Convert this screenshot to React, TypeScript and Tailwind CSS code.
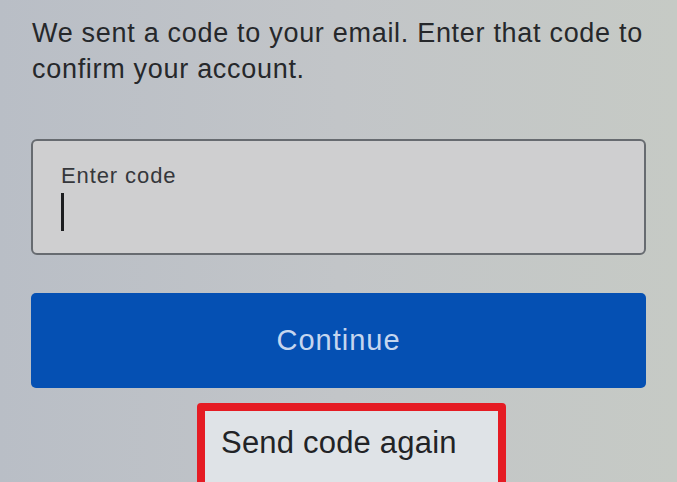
export default function App() {
  return (
    <div
      className="w-[677px] h-[482px] overflow-hidden bg-gradient-to-r from-[#b9bec6] via-[#c2c5c8] to-[#c6cac5] text-[#2a2c2f]"
      style={{ fontFamily: "'Liberation Sans', Arial, sans-serif" }}
    >
      <div className="px-[31px] pt-[15px]">
        <p className="text-[27px] leading-[36px] tracking-[0.7px] pl-[1px] text-[#26282b]">
          We sent a code to your email. Enter that code to
          <br />
          confirm your account.
        </p>

        <div className="mt-[52px] h-[116px] rounded-[6px] border-2 border-[#676b70] bg-[#cfcfd0] pl-[28px] pt-[22px]">
          <div className="text-[22px] leading-[26px] tracking-[0.9px] text-[#35373b]">Enter code</div>
          <div className="mt-[4px] w-[3px] h-[38px] bg-[#1c1d1f]" />
        </div>

        <button className="mt-[38px] w-full h-[95px] rounded-[5px] bg-[#0550b3] text-[29px] tracking-[1px] text-[#c5d6ef]">
          Continue
        </button>

        <div className="mt-[15px] ml-[166px] w-[309px] h-[90px] rounded-[4px] border-[8px] border-[#e51b23] bg-[#dfe3e7] pl-[16px] pt-[13px] text-[31px] leading-[38px] tracking-[0.2px] text-[#222326]">
          Send code again
        </div>
      </div>
    </div>
  );
}
